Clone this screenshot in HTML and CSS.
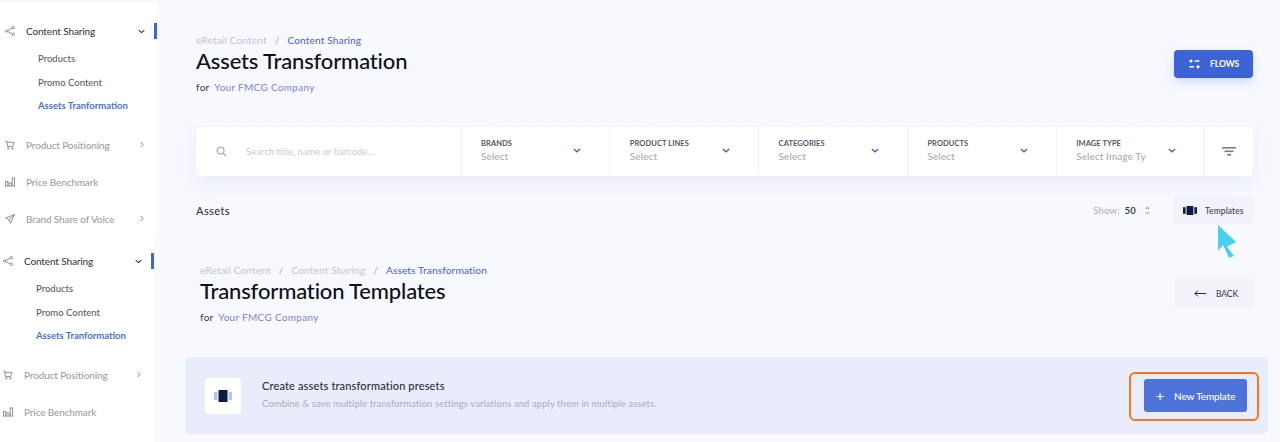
FILE: index.html
```html
<!DOCTYPE html>
<html lang="en">
<head>
<meta charset="utf-8">
<title>Assets Transformation</title>
<link rel="stylesheet" href="styles.css">
</head>
<body>
<svg class="defs" width="0" height="0" aria-hidden="true">
  <symbol id="i-share" viewBox="0 0 11 11"><g fill="none" stroke="currentColor" stroke-width="1"><circle cx="1.8" cy="5.5" r="1.3"/><circle cx="9.2" cy="1.8" r="1.3"/><circle cx="9.2" cy="9.2" r="1.3"/><path d="M3 4.9 8 2.4M3 6.1 8 8.6"/></g></symbol>
  <symbol id="i-cart" viewBox="0 0 11 11"><g fill="none" stroke="currentColor" stroke-width="1"><path d="M.3 1h1.500l1 6.200h5.600L10 2.600H2.200"/><circle cx="3.600" cy="9.300" r=".8"/><circle cx="8" cy="9.300" r=".8"/></g></symbol>
  <symbol id="i-bars" viewBox="0 0 11 11"><g fill="none" stroke="currentColor" stroke-width="1"><rect x=".5" y="5" width="2.600" height="5"/><rect x="4.200" y="6.500" width="2.600" height="3.500"/><rect x="7.900" y="1" width="2.600" height="9"/></g></symbol>
  <symbol id="i-send" viewBox="0 0 11 11"><path d="M10.400.6.6 4.400l3.600 1.800L6 10.400zM4.200 6.200 10.400.6" fill="none" stroke="currentColor" stroke-width="1" stroke-linejoin="round"/></symbol>
  <symbol id="i-down" viewBox="0 0 10 6"><path d="m1 1 4 3.600L9 1" fill="none" stroke="currentColor" stroke-width="1.600"/></symbol>
  <symbol id="i-right" viewBox="0 0 6 10"><path d="m1 1 3.600 4L1 9" fill="none" stroke="currentColor" stroke-width="1.400"/></symbol>
</svg>

<section class="screen screen-top">
  <nav class="sidebar">
    <div class="nav-group">
      <div class="nav-item is-open"><svg class="nav-icon"><use href="#i-share"/></svg><span class="nav-label">Content Sharing</span><svg class="chev-down"><use href="#i-down"/></svg><i class="indicator"></i></div>
      <ul class="sub-list">
        <li>Products</li>
        <li>Promo Content</li>
        <li class="is-active">Assets Tranformation</li>
      </ul>
    </div>
    <div class="nav-item"><svg class="nav-icon"><use href="#i-cart"/></svg><span class="nav-label">Product Positioning</span><svg class="chev-right"><use href="#i-right"/></svg></div>
    <div class="nav-item"><svg class="nav-icon"><use href="#i-bars"/></svg><span class="nav-label">Price Benchmark</span></div>
    <div class="nav-item"><svg class="nav-icon"><use href="#i-send"/></svg><span class="nav-label">Brand Share of Voice</span><svg class="chev-right"><use href="#i-right"/></svg></div>
  </nav>
  <main class="main">
    <header class="page-head">
      <div>
        <div class="crumbs"><span>eRetail Content</span><span class="sep">/</span><span class="current">Content Sharing</span></div>
        <h1>Assets Transformation</h1>
        <p class="for">for <a>Your FMCG Company</a></p>
      </div>
      <button class="btn-flows">
        <svg width="11" height="10" viewBox="0 0 11 10"><g fill="currentColor"><circle cx="2" cy="2" r="1.600"/><rect x="5.500" y="1.200" width="5" height="1.600" rx=".6"/><rect x=".2" y="7" width="5" height="1.600" rx=".6"/><circle cx="9" cy="7.800" r="1.600"/></g></svg>
        <span>FLOWS</span>
      </button>
    </header>
    <div class="filters">
      <div class="search">
        <svg width="11" height="11" viewBox="0 0 11 11"><g fill="none" stroke="currentColor" stroke-width="1.400"><circle cx="4.600" cy="4.600" r="3.400"/><path d="m7.200 7.200 3 3"/></g></svg>
        <span>Search title, name or barcode...</span>
      </div>
      <div class="filter"><div><b>BRANDS</b><span>Select</span></div><svg class="chev-blue"><use href="#i-down"/></svg></div>
      <div class="filter"><div><b>PRODUCT LINES</b><span>Select</span></div><svg class="chev-blue"><use href="#i-down"/></svg></div>
      <div class="filter"><div><b>CATEGORIES</b><span>Select</span></div><svg class="chev-blue"><use href="#i-down"/></svg></div>
      <div class="filter"><div><b>PRODUCTS</b><span>Select</span></div><svg class="chev-blue"><use href="#i-down"/></svg></div>
      <div class="filter"><div><b>IMAGE TYPE</b><span>Select Image Ty</span></div><svg class="chev-blue"><use href="#i-down"/></svg></div>
      <div class="filter-toggle"><svg width="14" height="9" viewBox="0 0 14 9"><g fill="currentColor"><rect width="14" height="1.600"/><rect x="2.500" y="3.500" width="9" height="1.600"/><rect x="5" y="7" width="4" height="1.600"/></g></svg></div>
    </div>
    <div class="assets-row">
      <strong>Assets</strong>
      <div class="assets-tools">
        <span class="show">Show: <em>50</em></span>
        <svg class="stepper" width="5" height="9" viewBox="0 0 5 9"><path d="M.8 3 2.500 1.200 4.200 3M.8 6l1.700 1.800L4.200 6" fill="none" stroke="currentColor" stroke-width=".9"/></svg>
        <button class="btn-soft btn-templates">
          <svg width="14" height="9" viewBox="0 0 14 9"><g fill="#0f1a45"><rect x="3.600" width="6.800" height="9"/><rect y="1.200" width="2.600" height="6.600"/><rect x="11.400" y="1.200" width="2.600" height="6.600"/></g></svg>
          <span>Templates</span>
        </button>
      </div>
    </div>
  </main>
  <svg class="cursor" width="22" height="36" viewBox="0 0 22 36"><path d="M2 1 20 18 11 22.700 18 32 13 33.700 7 21 2 26.700Z" fill="#48cfee"/></svg>
</section>

<section class="screen screen-bottom">
  <nav class="sidebar">
    <div class="nav-group">
      <div class="nav-item is-open"><svg class="nav-icon"><use href="#i-share"/></svg><span class="nav-label">Content Sharing</span><svg class="chev-down"><use href="#i-down"/></svg><i class="indicator"></i></div>
      <ul class="sub-list">
        <li>Products</li>
        <li>Promo Content</li>
        <li class="is-active">Assets Tranformation</li>
      </ul>
    </div>
    <div class="nav-item"><svg class="nav-icon"><use href="#i-cart"/></svg><span class="nav-label">Product Positioning</span><svg class="chev-right"><use href="#i-right"/></svg></div>
    <div class="nav-item"><svg class="nav-icon"><use href="#i-bars"/></svg><span class="nav-label">Price Benchmark</span></div>
  </nav>
  <main class="main">
    <header class="page-head">
      <div>
        <div class="crumbs"><span>eRetail Content</span><span class="sep">/</span><span>Content Sharing</span><span class="sep">/</span><span class="current">Assets Transformation</span></div>
        <h1>Transformation Templates</h1>
        <p class="for">for <a>Your FMCG Company</a></p>
      </div>
      <button class="btn-soft btn-back">
        <svg width="12" height="7" viewBox="0 0 12 7"><path d="M12 3.500H1M3.800.6 1 3.500l2.800 2.900" fill="none" stroke="#1f2547" stroke-width="1"/></svg>
        <span>BACK</span>
      </button>
    </header>
    <div class="banner">
      <div class="banner-icon"><svg width="18" height="12" viewBox="0 0 18 12"><rect y="2" width="3.500" height="8" fill="#b9c3ea"/><rect x="14.500" y="2" width="3.500" height="8" fill="#b9c3ea"/><rect x="4.500" width="9" height="12" fill="#0f1a45"/></svg></div>
      <div class="banner-text">
        <h2>Create assets transformation presets</h2>
        <p>Combine &amp; save multiple transformation settings variations and apply them in multiple assets.</p>
      </div>
      <button class="btn-new"><span class="plus">+</span><span>New Template</span></button>
      <i class="highlight"></i>
    </div>
  </main>
</section>
</body>
</html>
```
FILE: styles.css
```css
* { box-sizing: border-box; }
html, body { margin: 0; padding: 0; }
body {
  width: 1280px;
  height: 442px;
  overflow: hidden;
  background: #f8f9ff;
  font-family: "Lato", "Open Sans", sans-serif;
  color: #1e2233;
}
.defs { position: absolute; }
button { border: 0; font: inherit; padding: 0; }
ul { list-style: none; margin: 0; padding: 0; }
h1, h2, p { margin: 0; }

.screen { display: flex; position: relative; }
.screen-top { height: 236px; }
.screen-bottom { height: 206px; }

/* Sidebar */
.sidebar { background: #fff; flex: none; }
.screen-top .sidebar { width: 157px; margin-top: 3px; padding: 19px 0 0 5px; }
.screen-bottom .sidebar { width: 154px; padding: 16px 0 0 3px; }
.nav-group { margin-bottom: 18px; }
.nav-item {
  display: flex;
  align-items: center;
  position: relative;
  height: 18px;
  margin-bottom: 19px;
  color: #9c9ea8;
  font-size: 10px;
  font-weight: 500;
  letter-spacing: -.14px;
}
.nav-group .nav-item { margin-bottom: 7px; }
.nav-item.is-open { color: #3f424f; }
.nav-icon { width: 10px; height: 10px; flex: none; margin-right: 11px; color: #85878f; }
.nav-label { flex: 1; white-space: nowrap; }
.chev-down { width: 7px; height: 5px; flex: none; color: #2a2d3c; margin-right: 12px; }
.chev-right { width: 4px; height: 7px; flex: none; margin-right: 13.500px; color: #7f818c; }
.indicator {
  position: absolute;
  right: 0;
  top: 1px;
  width: 3px;
  height: 16px;
  background: #3f66d9;
}
.sub-list { padding-left: 33px; }
.sub-list li {
  height: 23.500px;
  line-height: 23.500px;
  font-size: 9.500px;
  font-weight: 500;
  color: #5c5e6b;
  letter-spacing: 0;
  white-space: nowrap;
}
.sub-list li.is-active { color: #4a6fe0; font-weight: 700; letter-spacing: 0; }

/* Main */
.main { flex: 1; min-width: 0; }
.screen-top .main { padding: 33px 27px 0 39px; }
.screen-bottom .main { padding: 27px 12px 0 31px; }
.page-head { display: flex; justify-content: space-between; align-items: flex-start; }
.screen-bottom .page-head { padding: 0 15px 0 15px; }
.crumbs { display: flex; gap: 7px; font-size: 10.200px; line-height: 15px; color: #c3c5ce; letter-spacing: .1px; }
.crumbs .sep { color: #a9abb6; margin: 0 1px; }
.crumbs .current { color: #4a62d0; }
h1 { margin-top: -1px; font-size: 22px; line-height: 27px; font-weight: 500; color: #0e1020; letter-spacing: -.16px; white-space: nowrap; }
.for { margin-top: 6px; font-size: 10px; line-height: 14px; color: #33364a; letter-spacing: .3px; }
.for a { margin-left: 2px; color: #7d80d8; }

.btn-flows {
  display: flex;
  align-items: center;
  gap: 10px;
  width: 79px;
  height: 28px;
  margin-top: 17px;
  padding-left: 15px;
  border-radius: 4px;
  background: #3d63d6;
  color: #fff;
  font-size: 8.500px;
  font-weight: 700;
  letter-spacing: 0;
  box-shadow: 0 4px 9px rgba(61, 99, 214, .22);
}
.btn-soft {
  display: flex;
  align-items: center;
  background: #f2f3f9;
  border-radius: 4px;
  color: #3f4263;
  font-weight: 500;
}

/* Filter bar */
.filters {
  display: grid;
  grid-template-columns: 264.500px repeat(5, 148.800px) 1fr;
  height: 49px;
  margin-top: 33px;
  background: #fff;
  border-radius: 5px;
  box-shadow: 0 6px 16px rgba(70, 85, 170, .09);
}
.search { display: flex; align-items: center; padding-left: 20px; gap: 19px; color: #b4b6c4; font-size: 9.500px; }
.search span { color: #c9cad6; letter-spacing: 0; }
.filter, .filter-toggle { display: flex; align-items: center; border-left: 1px solid #f0f1f6; }
.filter { justify-content: space-between; padding: 0 28px 2px 19.500px; }
.filter b { display: block; font-size: 7.500px; line-height: 10px; font-weight: 700; color: #53566a; letter-spacing: .08px; margin-bottom: 1px; white-space: nowrap; }
.filter span { display: block; font-size: 10px; line-height: 13px; color: #a3a5ae; letter-spacing: .1px; white-space: nowrap; }
.chev-blue { width: 8px; height: 5px; color: #3d5fd8; flex: none; }
.filter-toggle { justify-content: center; color: #7a7c85; }

/* Assets row */
.assets-row { display: flex; justify-content: space-between; align-items: center; height: 28px; margin-top: 20px; }
.assets-row strong { font-size: 11px; font-weight: 500; color: #33364a; letter-spacing: .4px; }
.assets-tools { display: flex; align-items: center; }
.show { font-size: 9.500px; color: #a9abb5; letter-spacing: .2px; }
.show em { font-style: normal; font-weight: 700; color: #3d3f50; margin-left: 2px; letter-spacing: .3px; }
.stepper { margin: 0 23px 0 9px; color: #6d6f7b; }
.btn-templates { width: 80px; height: 28px; gap: 8px; padding: 1px 0 0 10px; font-size: 8.500px; letter-spacing: .08px; }
.btn-back { width: 78px; height: 29px; margin-top: 16px; gap: 10px; padding-left: 19px; font-size: 8.500px; letter-spacing: -.1px; }
.cursor { position: absolute; left: 1216px; top: 224px; z-index: 2; }

/* Banner */
.banner {
  display: flex;
  align-items: center;
  position: relative;
  height: 77px;
  margin-top: 33px;
  padding: 0 21px 0 20px;
  background: #e9edf9;
  border-radius: 5px;
}
.banner-icon {
  display: flex;
  align-items: center;
  justify-content: center;
  width: 36px;
  height: 36px;
  flex: none;
  margin-right: 21px;
  background: #fff;
  border-radius: 4px;
}
.banner-text { flex: 1; padding-bottom: 3px; }
.banner-text h2 { font-size: 11px; line-height: 15px; font-weight: 500; color: #2a2d3e; letter-spacing: .15px; }
.banner-text p { margin-top: 4px; font-size: 9.500px; line-height: 13px; color: #a9acbd; letter-spacing: .07px; white-space: nowrap; }
.btn-new {
  display: flex;
  align-items: center;
  gap: 10px;
  width: 103px;
  height: 33px;
  padding-left: 12px;
  border-radius: 3px;
  background: #4f74d9;
  color: #fff;
  font-size: 10px;
  font-weight: 500;
  letter-spacing: -.12px;
}
.plus { font-size: 14px; font-weight: 400; line-height: 1; }
.highlight {
  position: absolute;
  right: 9px;
  top: 15px;
  width: 130px;
  height: 49px;
  border: 2px solid #f5761f;
  border-radius: 6px;
}
```
